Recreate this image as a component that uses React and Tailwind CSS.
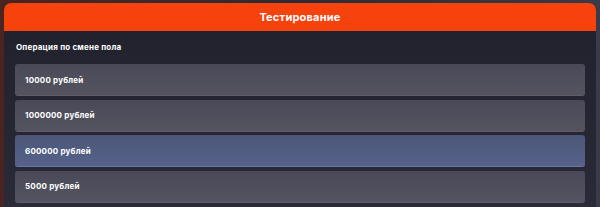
const options = [
  { label: '10000 рублей', active: false },
  { label: '1000000 рублей', active: false },
  { label: '600000 рублей', active: true },
  { label: '5000 рублей', active: false },
];

export default function App() {
  return (
    <div className="w-[600px] h-[207px] overflow-hidden bg-gradient-to-r from-[#4a2420] via-[#2e2b36] to-[#3a3a48] pt-[3px] px-[4px]" style={{ fontFamily: 'Inter, "Noto Sans", sans-serif' }}>
      <div className="h-full rounded-t-[7px] overflow-hidden bg-gradient-to-b from-[#20212c] to-[#2a2a38] flex flex-col">
        <div className="h-[28px] shrink-0 bg-[#f6420d] flex items-center justify-center">
          <span className="text-white font-bold text-[11px] tracking-[0.2px]">Тестирование</span>
        </div>
        <div className="px-[11px] pt-[11px]">
          <div className="text-white font-bold text-[8px] leading-[10px] pl-[1px] tracking-[0.2px]">Операция по смене пола</div>
          <div className="mt-[12px] flex flex-col gap-[3.5px]">
            {options.map((o) => (
              <div
                key={o.label}
                className={
                  o.active
                    ? 'h-[32px] rounded-[3px] bg-gradient-to-b from-[#4b5677] to-[#56628a] border-b border-[#6a76a0] flex items-center pl-[10px]'
                    : 'h-[32px] rounded-[3px] bg-gradient-to-b from-[#4a4958] to-[#54535f] border-b border-[#5d5c6a] flex items-center pl-[10px]'
                }
              >
                <span className="text-white font-bold text-[8px] tracking-[0.2px]">{o.label}</span>
              </div>
            ))}
          </div>
        </div>
      </div>
    </div>
  );
}
